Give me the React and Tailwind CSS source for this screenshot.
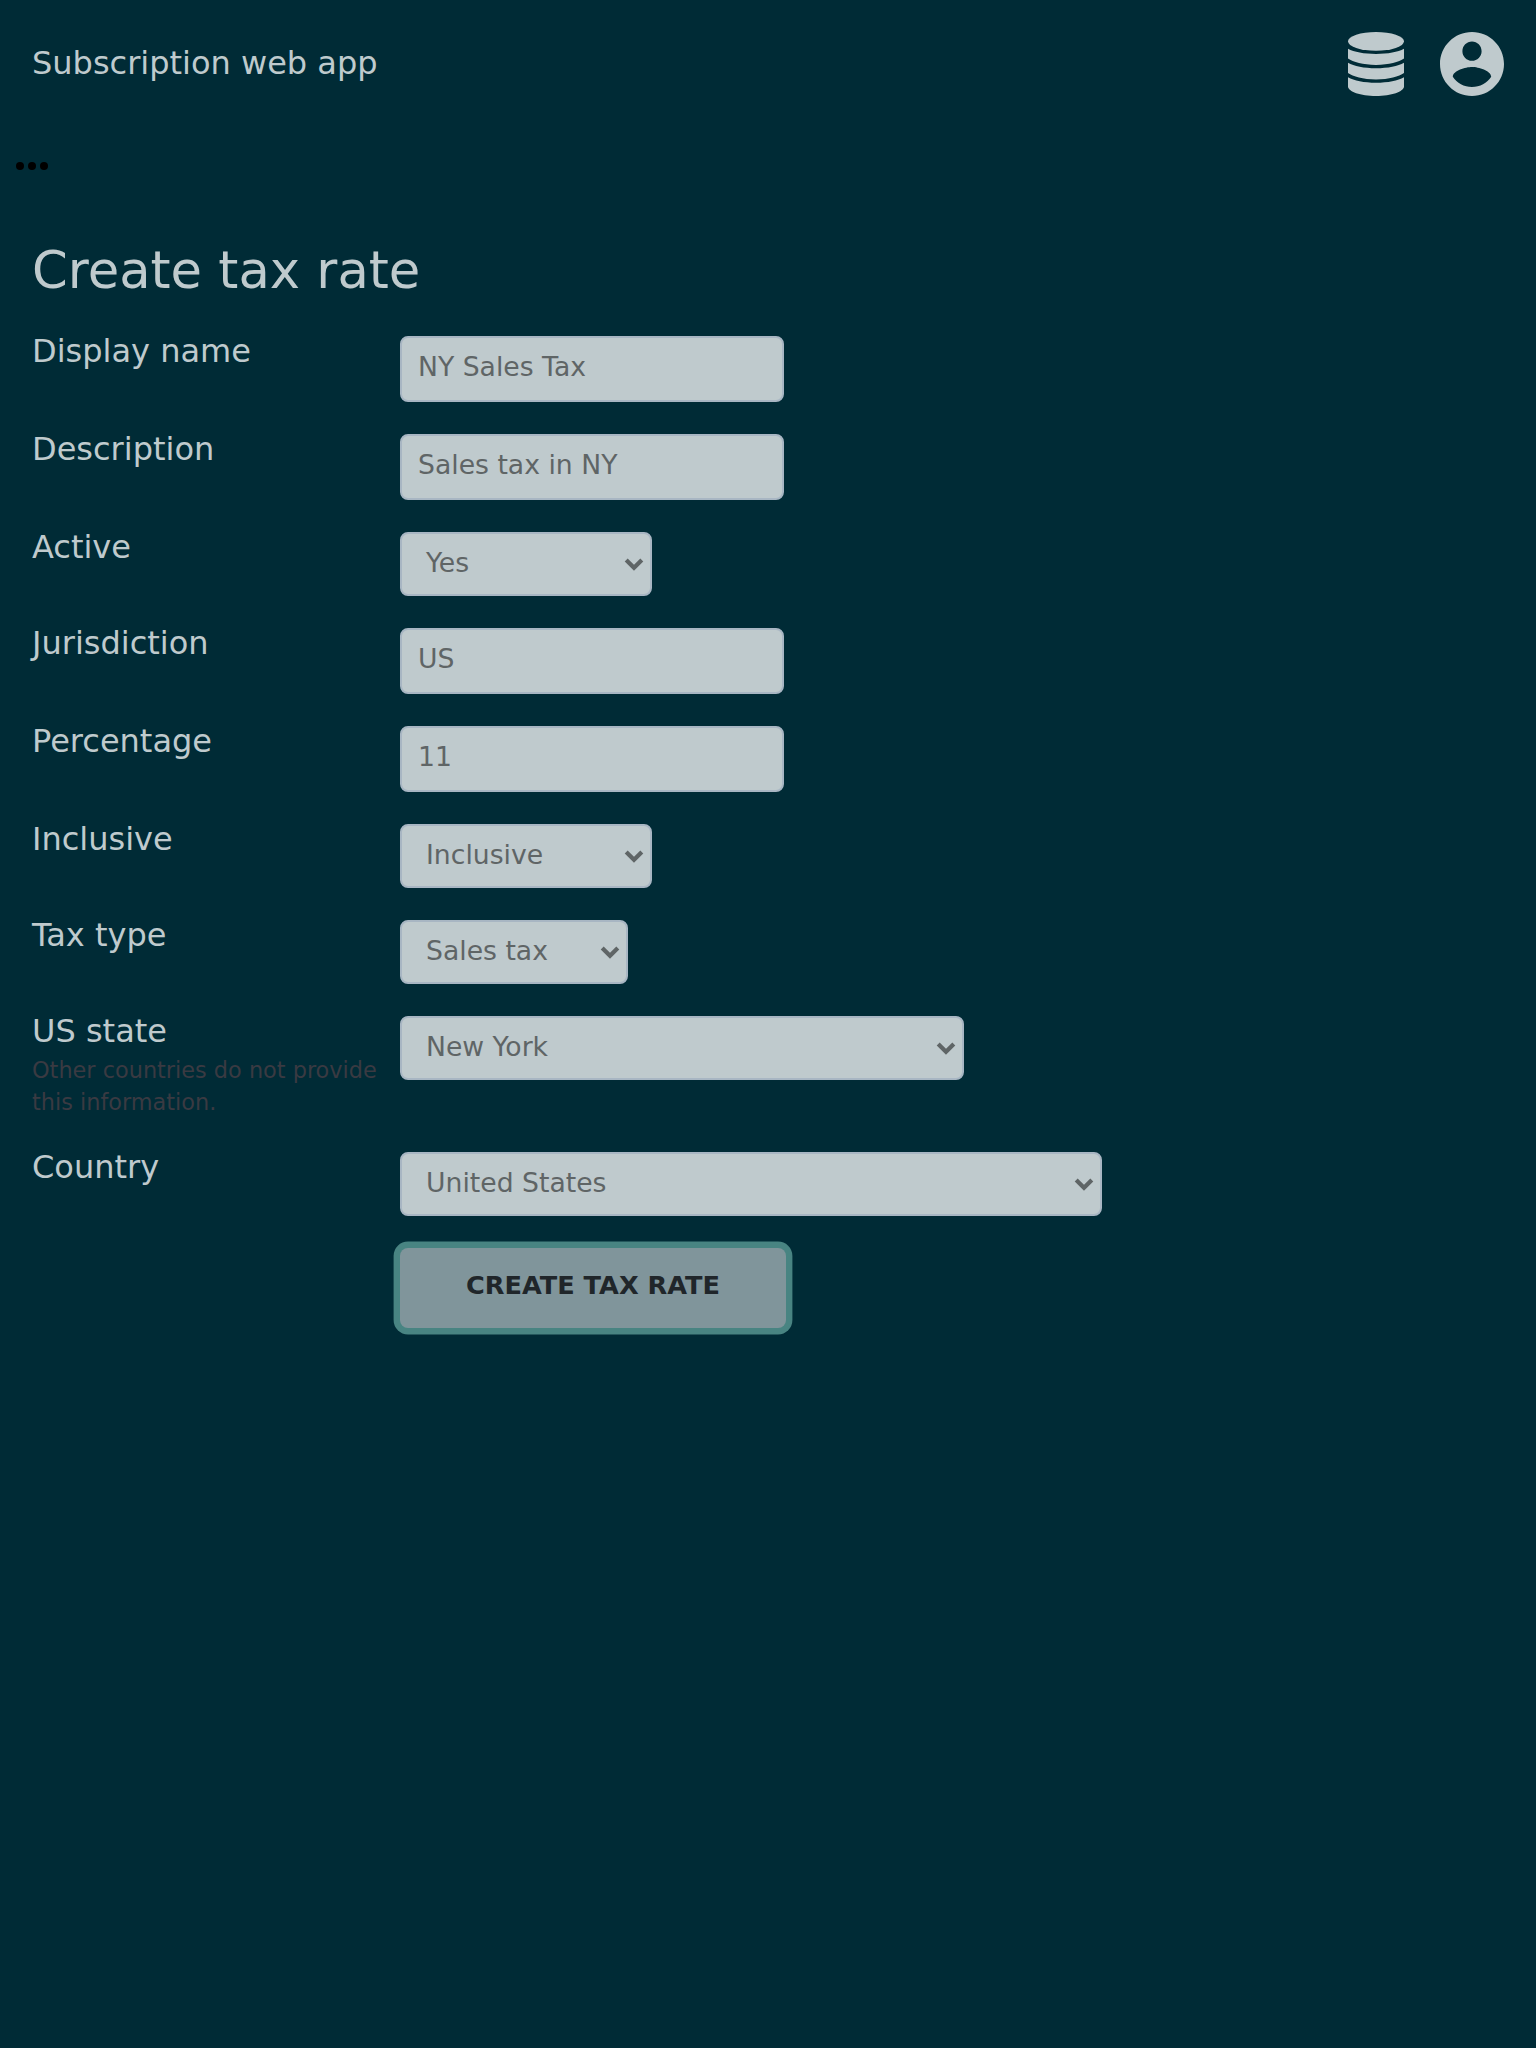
const rows = [
  { label: 'Display name', value: 'NY Sales Tax', kind: 'input', box: 'w-[384px] h-[66px]' },
  { label: 'Description', value: 'Sales tax in NY', kind: 'input', box: 'w-[384px] h-[66px]' },
  { label: 'Active', value: 'Yes', kind: 'select', box: 'w-[252px] h-[64px]' },
  { label: 'Jurisdiction', value: 'US', kind: 'input', box: 'w-[384px] h-[66px]' },
  { label: 'Percentage', value: '11', kind: 'input', box: 'w-[384px] h-[66px]' },
  { label: 'Inclusive', value: 'Inclusive', kind: 'select', box: 'w-[252px] h-[64px]' },
  { label: 'Tax type', value: 'Sales tax', kind: 'select', box: 'w-[228px] h-[64px]' },
  { label: 'US state', note: 'Other countries do not provide this information.', value: 'New York', kind: 'select', box: 'w-[564px] h-[64px]' },
  { label: 'Country', value: 'United States', kind: 'select', box: 'w-[702px] h-[64px]' },
];

function Control({ value, kind, box }) {
  const base = 'flex items-center justify-between rounded-[8px] border-2 border-[#a8b6c3] bg-[#bfcacd] text-[26.6667px] leading-[32px] text-[#5f6566]';
  if (kind === 'input') {
    return <div className={`${base} ${box} pb-[4px] pl-[16px]`}>{value}</div>;
  }
  return (
    <div className={`${base} ${box} pb-[2px] pl-[24px] pr-[6px]`}>
      <span>{value}</span>
      <svg className="mt-[2px] h-[20px] w-[20px]" viewBox="0 0 20 20" fill="none" stroke="currentColor" strokeWidth="4.2">
        <path d="M2.2 6L10 13.700L17.800 6" />
      </svg>
    </div>
  );
}

function DatabaseIcon() {
  return (
    <svg className="h-[64px] w-[56px]" viewBox="0 0 56 64" fill="currentColor">
      <ellipse cx="28" cy="9.35" rx="28" ry="9.35" />
      <path d="M0 16.700C6 20 16 21.900 28 21.900s22-1.900 28-5.200V26.500C51 29.800 41 32.900 28 32.900S5 29.800 0 26.500z" />
      <path d="M0 30.800C6 34.200 16 36.300 28 36.300s22-2.100 28-5.500V41C51 44.300 41 47.500 28 47.500S5 44.300 0 41z" />
      <path d="M0 45.300C6 48.700 16 50.800 28 50.800s22-2.100 28-5.500V54.500C56 59.500 43.500 64 28 64S0 59.500 0 54.500z" />
    </svg>
  );
}

function AccountIcon() {
  return (
    <svg className="h-[64px] w-[64px]" viewBox="2 2 20 20" fill="currentColor">
      <path d="M12 2C6.480 2 2 6.480 2 12s4.480 10 10 10 10-4.480 10-10S17.520 2 12 2zm0 3c1.660 0 3 1.340 3 3s-1.340 3-3 3-3-1.340-3-3 1.340-3 3-3zm0 14.200c-2.500 0-4.710-1.280-6-3.220.030-1.990 4-3.080 6-3.080 1.990 0 5.970 1.090 6 3.080-1.290 1.940-3.500 3.220-6 3.220z" />
    </svg>
  );
}

export default function App() {
  return (
    <div className="min-h-[2048px] w-full bg-[#002b36] font-['DejaVu_Sans',sans-serif] text-[#bfcacd]">
      <header className="flex h-[128px] items-center justify-between px-[32px]">
        <span className="pb-[2px] text-[32px] leading-[40px]">Subscription web app</span>
        <div className="flex items-center gap-[36px]">
          <DatabaseIcon />
          <AccountIcon />
        </div>
      </header>
      <div className="flex h-[76px] items-center gap-[4px] pl-[16px]">
        <i className="h-[8px] w-[8px] rounded-full bg-black" />
        <i className="h-[8px] w-[8px] rounded-full bg-black" />
        <i className="h-[8px] w-[8px] rounded-full bg-black" />
      </div>
      <main className="px-[32px] pt-[34px]">
        <h1 className="h-[98px] text-[51.2px] leading-[64px]">Create tax rate</h1>
        <div className="flex flex-col gap-[32px]">
          {rows.map((r) => (
            <div key={r.label} className="flex items-start">
              <div className="-mt-[5px] w-[368px] shrink-0">
                <div className={r.note ? 'h-[43px] text-[32px] leading-[40px]' : 'text-[32px] leading-[40px]'}>{r.label}</div>
                {r.note && <div className="h-[66px] w-[352px] text-[22.4px] leading-[32px] text-[#3a3a42]">{r.note}</div>}
              </div>
              <Control value={r.value} kind={r.kind} box={r.box} />
            </div>
          ))}
        </div>
        <button className="ml-[368px] mt-[32px] flex h-[80px] w-[386px] items-center justify-center rounded-[8px] bg-[#80959b] pb-[6px] text-[25.6px] font-bold text-[#20262a] shadow-[0_0_0_6.4px_#488482]">
          CREATE TAX RATE
        </button>
      </main>
    </div>
  );
}
